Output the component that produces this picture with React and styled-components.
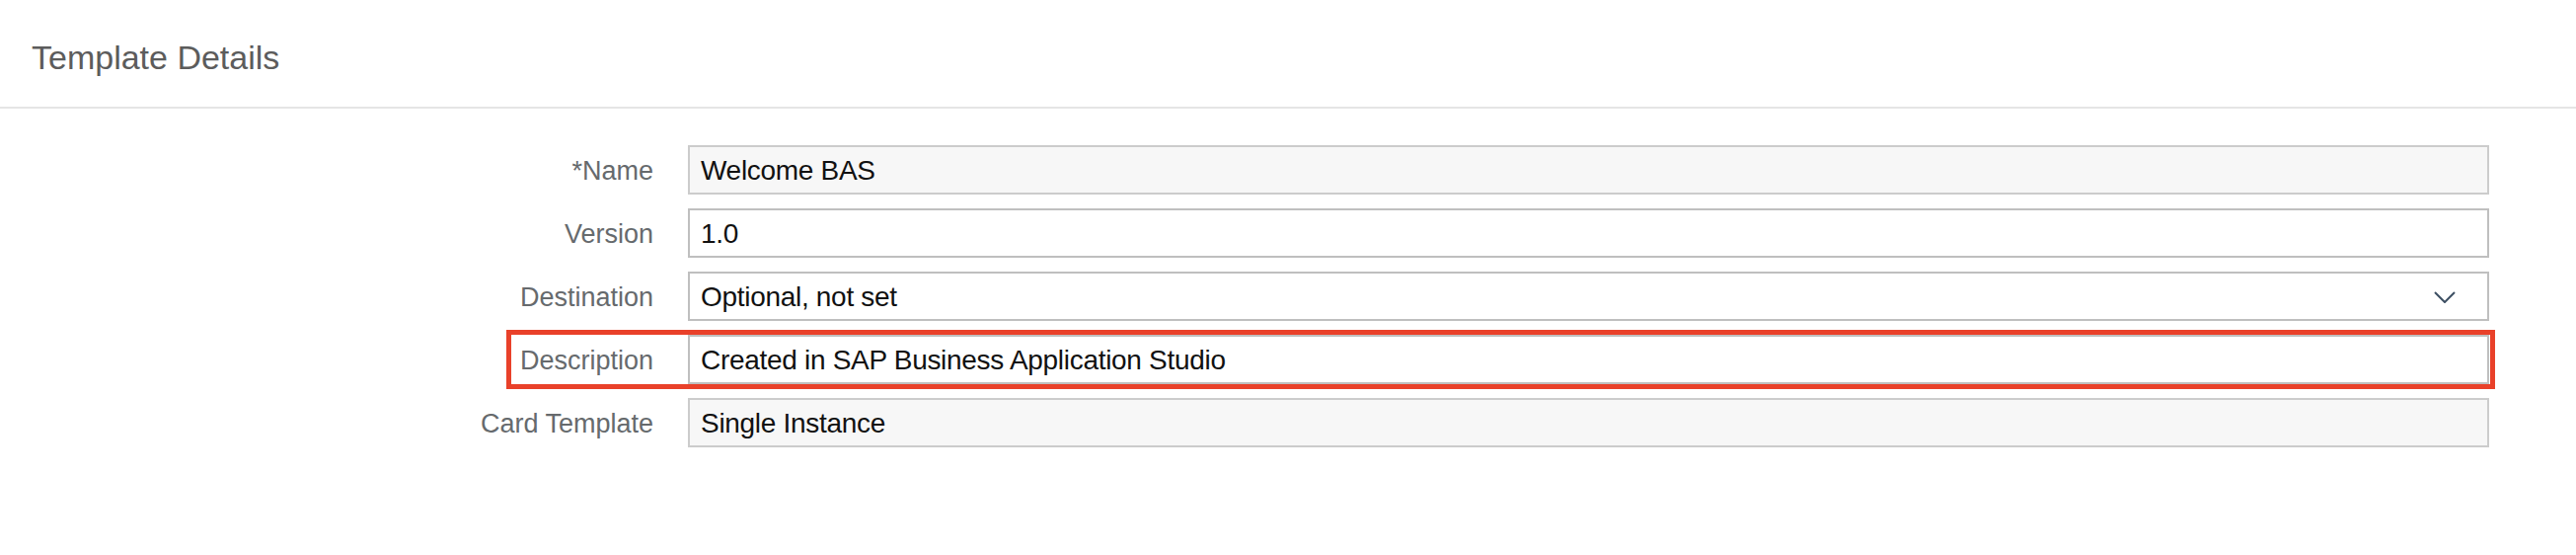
import React from "react";
import styled, { createGlobalStyle } from "styled-components";

const Global = createGlobalStyle`
  html, body { margin: 0; padding: 0; background: #ffffff; }
  body { font-family: "Liberation Sans", Arial, sans-serif; }
  * { box-sizing: border-box; }
`;

const Page = styled.div`
  width: 2610px;
  min-height: 562px;
  background: #ffffff;
`;

const Header = styled.header`
  height: 110px;
  padding: 8px 0 0 32px;
  display: flex;
  align-items: center;
  border-bottom: 2px solid #e5e5e5;
`;

const Title = styled.h2`
  margin: 0;
  font-size: 34px;
  font-weight: 400;
  color: #5c5c5c;
`;

const Form = styled.div`
  display: flex;
  flex-direction: column;
  gap: 14px;
  padding: 37px 88px 0 0;
`;

const Row = styled.div`
  position: relative;
  display: grid;
  grid-template-columns: 662px 1fr;
  column-gap: 35px;
  align-items: center;
  height: 50px;

  ${(p) =>
    p.$highlight &&
    `
    &::after {
      content: "";
      position: absolute;
      left: 513px;
      right: -6px;
      top: -5px;
      bottom: -5px;
      border: 5px solid #e9412a;
      pointer-events: none;
    }
  `}
`;

const Label = styled.label`
  padding-top: 3px;
  text-align: right;
  font-size: 27px;
  color: #666a6d;
  white-space: nowrap;
`;

const Field = styled.div`
  position: relative;
  height: 50px;
  display: flex;
  align-items: center;
  padding: 1px 12px 0 11px;
  border: 2px solid ${(p) => (p.$readOnly ? "#cccccc" : "#bfbfbf")};
  background: ${(p) => (p.$readOnly ? "#f7f7f7" : "#ffffff")};
  font-size: 28px;
  letter-spacing: -0.3px;
  color: #111111;
  white-space: nowrap;
`;

const Value = styled.span`
  flex: 1;
`;

const Chevron = styled.svg`
  width: 22px;
  height: 12px;
  margin-right: 20px;
  flex: none;
`;

const rows = [
  { label: "*Name", value: "Welcome BAS", readOnly: true },
  { label: "Version", value: "1.0" },
  { label: "Destination", value: "Optional, not set", select: true },
  { label: "Description", value: "Created in SAP Business Application Studio", highlight: true },
  { label: "Card Template", value: "Single Instance", readOnly: true },
];

export default function App() {
  return (
    <Page>
      <Global />
      <Header>
        <Title>Template Details</Title>
      </Header>
      <Form>
        {rows.map((r) => (
          <Row key={r.label} $highlight={r.highlight}>
            <Label>{r.label}</Label>
            <Field $readOnly={r.readOnly}>
              <Value>{r.value}</Value>
              {r.select && (
                <Chevron viewBox="0 0 22 12" aria-hidden="true">
                  <polyline
                    points="1,1 11,11 21,1"
                    fill="none"
                    stroke="#3d4f63"
                    strokeWidth="2"
                  />
                </Chevron>
              )}
            </Field>
          </Row>
        ))}
      </Form>
    </Page>
  );
}
